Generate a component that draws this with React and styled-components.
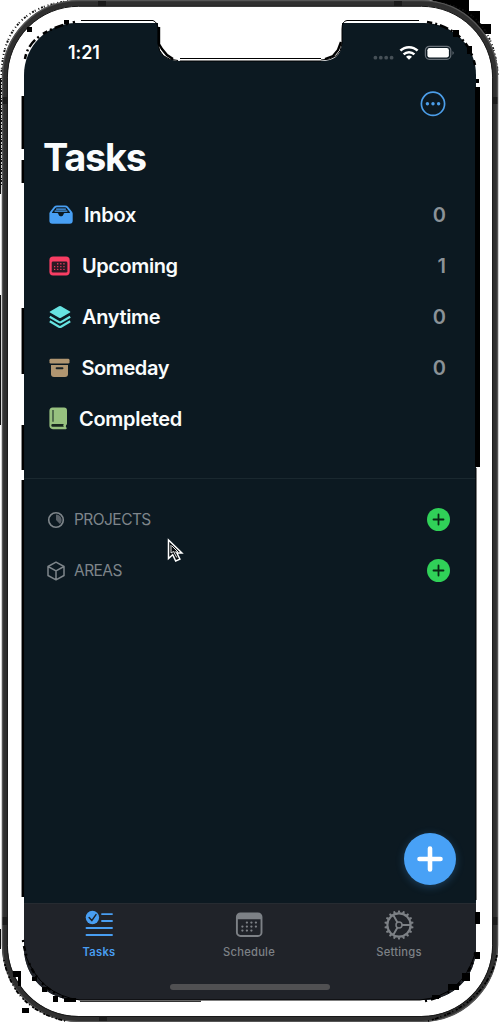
import React from 'react';
import styled, { createGlobalStyle } from 'styled-components';

const Global = createGlobalStyle`
  *{box-sizing:border-box}
  body{margin:0;background:#fff;font-family:Inter,"Liberation Sans",sans-serif;overflow:hidden}
  svg{display:block}
  button{border:0;padding:0;background:none;font:inherit;color:inherit}
`;
const Device = styled.div`
  position:relative;width:500px;height:1024px;padding:23px 24px 24px;background:#fff;overflow:hidden;
`;
const Shell = styled.svg`position:absolute;inset:0;pointer-events:none;`;
const Screen = styled.main`
  position:relative;height:977px;width:452px;background:#0c1921;border-radius:52px;overflow:hidden;
  display:flex;flex-direction:column;
`;
const Status = styled.header`
  height:58px;padding:1px 21px 0 44px;display:flex;align-items:center;justify-content:space-between;
  color:#fff;font-size:18px;font-weight:600;
`;
const Time = styled.span`letter-spacing:-.1px;line-height:20px;`;
const Signals = styled.div`display:flex;align-items:center;`;
const Toolbar = styled.div`height:46px;padding:10px 30px 0 0;display:flex;justify-content:flex-end;`;
const Title = styled.h1`
  margin:0;height:62px;padding-left:19px;color:#fafcfd;font-size:38px;line-height:60px;font-weight:700;letter-spacing:-1.3px;
`;
const List = styled.nav`display:flex;flex-direction:column;`;
const Row = styled.div`
  height:51px;display:flex;align-items:center;padding:0 30px 0 25px;color:#fafcfd;
  font-size:20px;font-weight:600;
`;
const RowIcon = styled.span`width:${p => p.$w}px;flex:none;`;
const Label = styled.span`letter-spacing:${p => p.$track || 0}px;line-height:28px;`;
const Count = styled.span`margin-left:auto;color:#8b9298;font-size:20px;font-weight:600;`;
const Groups = styled.section`margin-top:34px;padding-top:15px;border-top:1px solid #1a282f;flex:1;`;
const GroupRow = styled.div`
  height:51px;display:flex;align-items:center;padding:0 26px 0 22px;color:#7e858a;font-size:15.5px;
`;
const GroupIcon = styled.span`width:28px;flex:none;`;
const AddButton = styled.button`
  width:23px;height:23px;border-radius:50%;background:#30d158;margin-left:auto;
`;
const Fab = styled.button`
  position:absolute;right:20px;bottom:115px;width:52px;height:52px;border-radius:50%;background:#48a1f6;
  box-shadow:0 2px 8px rgba(72,161,246,.28);
`;
const Tabs = styled.footer`height:97px;background:#202329;border-top:1px solid #262b31;`;
const TabList = styled.div`display:flex;width:450px;height:80px;`;
const Tab = styled.button`
  flex:1;display:flex;flex-direction:column;align-items:center;padding-top:6px;
  color:${p => p.$active ? '#489ef2' : '#7d8186'};
  font-size:11.2px;font-weight:${p => p.$active ? 600 : 500};line-height:14px;letter-spacing:.25px;
`;
const TabIcon = styled.span`height:35px;`;
const HomeBar = styled.div`width:160px;height:6px;border-radius:3px;background:#505052;margin:0 auto;`;
const Pointer = styled.svg`position:absolute;left:143px;top:515px;`;

const Inbox = () => <svg width="24" height="20" viewBox="0 0 24 20">
  <path d="M5 1.7Q6 .5 8 .5h8q2 0 3 1.2l4 5q.7.9.7 2v7q0 3-3 3H3.4q-3 0-3-3v-7q0-1.1.7-2z" fill="#489ff4"/>
  <path d="M6.3 3Q7 2.3 8 2.3h8q1 0 1.7.7l3.2 4.3q.5.7-.4.7h-4.8q-.8 0-1 .7c-.5 3.4-4.9 3.4-5.4 0q-.2-.7-1-.7H3.5q-.9 0-.4-.7z" fill="#0c1921"/>
  <path d="M7.5 4.1h9M6 6.1h12" stroke="#489ff4" strokeWidth="1.1" strokeLinecap="round"/>
</svg>;
const Upcoming = () => <svg width="21" height="20" viewBox="0 0 21 20">
  <rect x=".4" y=".5" width="20.3" height="19" rx="3.7" fill="#f83d63"/>
  <rect x="2.7" y="5.5" width="15.7" height="11.1" rx="1.3" fill="#291924"/>
  <g fill="#f83d63">{[7.1,9.9,12.7].map((y,j)=>[5,8.1,11.2,14.3].map((x,i)=>!(j===0&&i===0)&&<rect key={`${x}-${y}`} x={x} y={y} width="1.3" height="1.4" rx=".5"/>))}</g>
</svg>;
const Anytime = () => <svg width="22" height="24" viewBox="0 0 22 24">
  <path d="M1 6.6 10 1.2q1-.6 2 0l9 5.4q.8.5 0 1l-9 5.1q-1 .6-2 0L1 7.6q-.8-.5 0-1z" fill="#67e3e1"/>
  <path d="m.8 11.8 9.2 5.3q1 .6 2 0l9.2-5.3M.8 16.3l9.2 5.4q1 .6 2 0l9.2-5.4" fill="none" stroke="#67e3e1" strokeWidth="2.2" strokeLinejoin="round"/>
</svg>;
const Someday = () => <svg width="21" height="20" viewBox="0 0 21 20">
  <rect x=".5" y=".8" width="20" height="4.8" rx="1.4" fill="#b19671"/><path d="M2 7h17v9q0 3-3 3H5q-3 0-3-3z" fill="#b19671"/><rect x="6.7" y="9.2" width="7.7" height="2" rx=".8" fill="#172024"/>
</svg>;
const Completed = () => <svg width="19" height="23" viewBox="0 0 19 23">
  <path d="M3.6.5h11.5Q18 .5 18 3.4v13q0 1-.8 1.7-1 1.3.3 2.6.8 1.4-.8 1.5H3.8Q.4 22 .4 18.6V4Q.4.5 3.6.5z" fill="#97c17f"/>
  <path d="M4 3v11.7" stroke="#263a2e" strokeWidth="1.2"/><path d="M3.5 17.1h11.3q-1.2 1.3 0 2.6H3.5q-1.2 0-1.2-1.3t1.2-1.3z" fill="#18271f"/>
</svg>;
const Plus = () => <svg width="23" height="23" viewBox="0 0 23 23"><path d="M11.5 6.5v10m-5-5h10" stroke="#092915" strokeWidth="1.8" strokeLinecap="round"/></svg>;
const Calendar = () => <svg width="28" height="28" viewBox="0 0 28 28">
  <rect x="1.9" y="3.4" width="24.6" height="22.6" rx="3.6" fill="none" stroke="#7d8186" strokeWidth="1.9"/><path d="M2 9.2V6.6q0-3.2 3-3.2h18.5q3 0 3 3.2v2.6z" fill="#7d8186"/>
  <g fill="#7d8186">{[12,16,20].map((y,j)=>[6.7,11.2,15.7,20.2].map((x,i)=>!(j===0&&i===0)&&!(j===2&&i===3)&&<circle key={`${x}-${y}`} cx={x+.7} cy={y+.6} r="1.15"/>))}</g>
</svg>;
const TasksIcon = () => <svg width="28" height="28" viewBox="0 0 28 28">
  <circle cx="7.4" cy="7.5" r="6.7" fill="#489ef2"/><path d="m4.1 7.6 2.7 3 4.2-6" fill="none" stroke="#202329" strokeWidth="1.5" strokeLinecap="round" strokeLinejoin="round"/>
  <path d="M17 4.1h10M17 11h10M1.5 18H27M1.5 25H27" stroke="#489ef2" strokeWidth="1.9" strokeLinecap="round"/>
</svg>;
const Gear = () => <svg width="30" height="30" viewBox="-15 -15 30 30" fill="none" stroke="#7d8186">
  <circle r="11.6" strokeWidth="2.1"/><circle r="3" strokeWidth="1.5"/>
  <path d="M3 0h8.5M-1.5-2.6-5.8-10M-1.5 2.6-5.8 10" strokeWidth="1.9"/>
  {Array.from({length:18},(_,i)=><path key={i} d="M-1.3-12.2-.8-14.6H.8l.5 2.4z" fill="#7d8186" stroke="none" transform={`rotate(${i*20})`}/>)}
</svg>;

const entries = [
  ['Inbox',Inbox,'0',35,-.25],['Upcoming',Upcoming,'1',33,-.42],['Anytime',Anytime,'0',33,-.35],['Someday',Someday,'0',32.5,-.42],['Completed',Completed,'',30,-.3]
];
function Frame() {
  return <Shell width="500" height="1024" viewBox="0 0 500 1024" fill="none">
    <path d="M430 0h39v11h11v13h11v10h-8Q462 8 430 0z" fill="#000"/>
    <path d="M1.5 185V76Q2 8 70 1M430 2Q493 5 498 76" stroke="#111" strokeWidth="2" strokeDasharray="1 2 2 1 1 3"/>
    <path d="M.5 78v116M.5 295v130M.5 929v20" stroke="#111"/>
    <path d="M22.8 96v53M22.8 160v23M22.8 308v66M22.8 425v45M22.8 480v417" stroke="#000" strokeWidth="2.5"/>
    <path d="M477.5 87v380" stroke="#000" strokeWidth="5"/><path d="M476 468v432" stroke="#000"/>
    <rect x="4.8" y="3.2" width="490.4" height="1015.8" rx="74" stroke="#303030" strokeWidth="6"/>
    <rect x="2.6" y=".7" width="494.8" height="1020.8" rx="76" stroke="#565656" strokeWidth="1.2"/>
    <rect x="7.4" y="6.3" width="485.2" height="1010.2" rx="71" stroke="#171717"/>
    <path d="M98 3.5h8M394 3.5h8M99 1018.5h8M5.2 97v7M494.8 97v7M5.2 917v8M494.8 917v8" stroke="#1b1b1b" strokeWidth="5"/>
    <path d="M158 19V42Q159 61 181 61H321Q341 61 342 43V19z" fill="#fff"/>
    <path d="M81 20.5h72q5 2 5 9v14q1 16 20 17M342 43V29q0-8 5-8.5h72M342 43q-1 17-21 17M180 58.5h141M180 61h141" stroke="#000"/>
    <path d="M25 59Q29 32 75 22M427 22Q467 29 475 65" stroke="#000" strokeWidth="2.5" strokeDasharray="5 3 2 3 9 3 2 5"/>
    <path d="M23 940Q30 990 75 1001M425 1001Q468 992 476 949" stroke="#000" strokeWidth="2.5" strokeDasharray="2 4 5 3 2 8"/>
    <path d="M25 954Q40 995 80 1000H420Q462 996 475 954M80 1001.3h121" stroke="#000"/>
    <path d="M159 27v17l3 5 5 6 6 4M341 42l-3 8-5 6-8 3" stroke="#000" strokeWidth="2.4"/>
    <path d="M4 960Q14 1010 66 1021M428 1021Q486 1005 497 955" stroke="#000" strokeWidth="1.7" strokeDasharray="1 3 2 1 4 2"/>
    <g fill="#000"><path d="M13 971h8v15h-3v-9h-5zM32 977h5v4h-5zM42 987h5v5h-5zM53 996h5v6h-5zM22 1008h7v5h-7zM64 998h12v4H64zM475 912h5v12h-5zM474 952h6v7h-5zM462 973h8v8h-8zM448 984h11v6h-11zM432 995h7v4h-7zM453 30h6v7h-6zM467 46h5v8h-5zM476 79h3v4h-3zM27 27h5v5h-5zM64 20h5v4h-5z"/></g>
  </Shell>;
}
export default function App(){
  return <><Global/><Device>
    <Screen>
      <Status><Time>1:21</Time><Signals><svg width="83" height="20" viewBox="0 0 83 20">
        <g fill="#465057">{[3.4,8.8,14.2,19.6].map(x=><circle key={x} cx={x} cy="14.7" r="1.9"/>)}</g>
        <g fill="none" stroke="#fff" strokeWidth="2.5"><path d="M28.4 7.7A12.3 12.3 0 0 1 45.6 7.7M31.6 11.3A7.8 7.8 0 0 1 42.4 11.3"/></g><path d="M34 13.7Q37 11.2 40 13.7L37 16.8z" fill="#fff"/>
        <rect x="53.4" y="3.3" width="25.4" height="13" rx="4" fill="none" stroke="#687078" strokeWidth="1.2"/><rect x="55.4" y="5.1" width="21.5" height="9.4" rx="2.2" fill="#fff"/><path d="M80.5 8q2.5 1.7 0 4z" fill="#687078"/>
      </svg></Signals></Status>
      <Toolbar><svg width="26" height="26" viewBox="0 0 26 26"><circle cx="13" cy="12.8" r="11.6" fill="none" stroke="#4c9ee9" strokeWidth="1.7"/><g fill="#4c9ee9"><circle cx="7.4" cy="12.8" r="1.7"/><circle cx="13" cy="12.8" r="1.7"/><circle cx="18.6" cy="12.8" r="1.7"/></g></svg></Toolbar>
      <Title>Tasks</Title>
      <List>
        {entries.map(([name,Icon,count,w,track])=><Row key={name}><RowIcon $w={w}><Icon/></RowIcon><Label $track={track}>{name}</Label><Count>{count}</Count></Row>)}
      </List>
      <Groups>
        <GroupRow><GroupIcon><svg width="20" height="20" viewBox="0 0 20 20"><circle cx="10" cy="10" r="7.3" fill="none" stroke="#7e858a" strokeWidth="1.6"/><path d="M10 4.4a5.6 5.6 0 0 1 3.9 9.6L10 10z" fill="#596168"/></svg></GroupIcon><Label $track={-.55}>PROJECTS</Label><AddButton aria-label="Add project"><Plus/></AddButton></GroupRow>
        <GroupRow><GroupIcon><svg width="20" height="20" viewBox="0 0 20 20" fill="none" stroke="#7e858a" strokeWidth="1.5" strokeLinejoin="round"><path d="M10 1.2 18 5.5v9l-8 4.3-8-4.3v-9zM2 5.5l8 4.3 8-4.3M10 9.8v9"/></svg></GroupIcon><Label $track={-.55}>AREAS</Label><AddButton aria-label="Add area"><Plus/></AddButton></GroupRow>
      </Groups>
      <Tabs><TabList>
        <Tab $active><TabIcon><TasksIcon/></TabIcon>Tasks</Tab><Tab><TabIcon><Calendar/></TabIcon>Schedule</Tab><Tab><TabIcon><Gear/></TabIcon>Settings</Tab>
      </TabList><HomeBar/></Tabs>
      <Fab aria-label="Add task"><svg width="52" height="52" viewBox="0 0 52 52"><path d="M26 15.5v21M15.5 26h21" stroke="#fff" strokeWidth="4.6" strokeLinecap="round"/></svg></Fab>
      <Pointer width="18" height="26" viewBox="0 0 18 26"><path d="M1.5 2v18.5l4.2-3.8 3 6.3 4.2-1.8-3-6.2h5z" fill="#05090b" stroke="#fff" strokeWidth="1.5"/><path d="M4 7v8l2.5-1.5 3.3 6M5 8l6 6H7.5" fill="none" stroke="#fff" strokeWidth=".9"/></Pointer>
    </Screen><Frame/>
  </Device></>;
}
